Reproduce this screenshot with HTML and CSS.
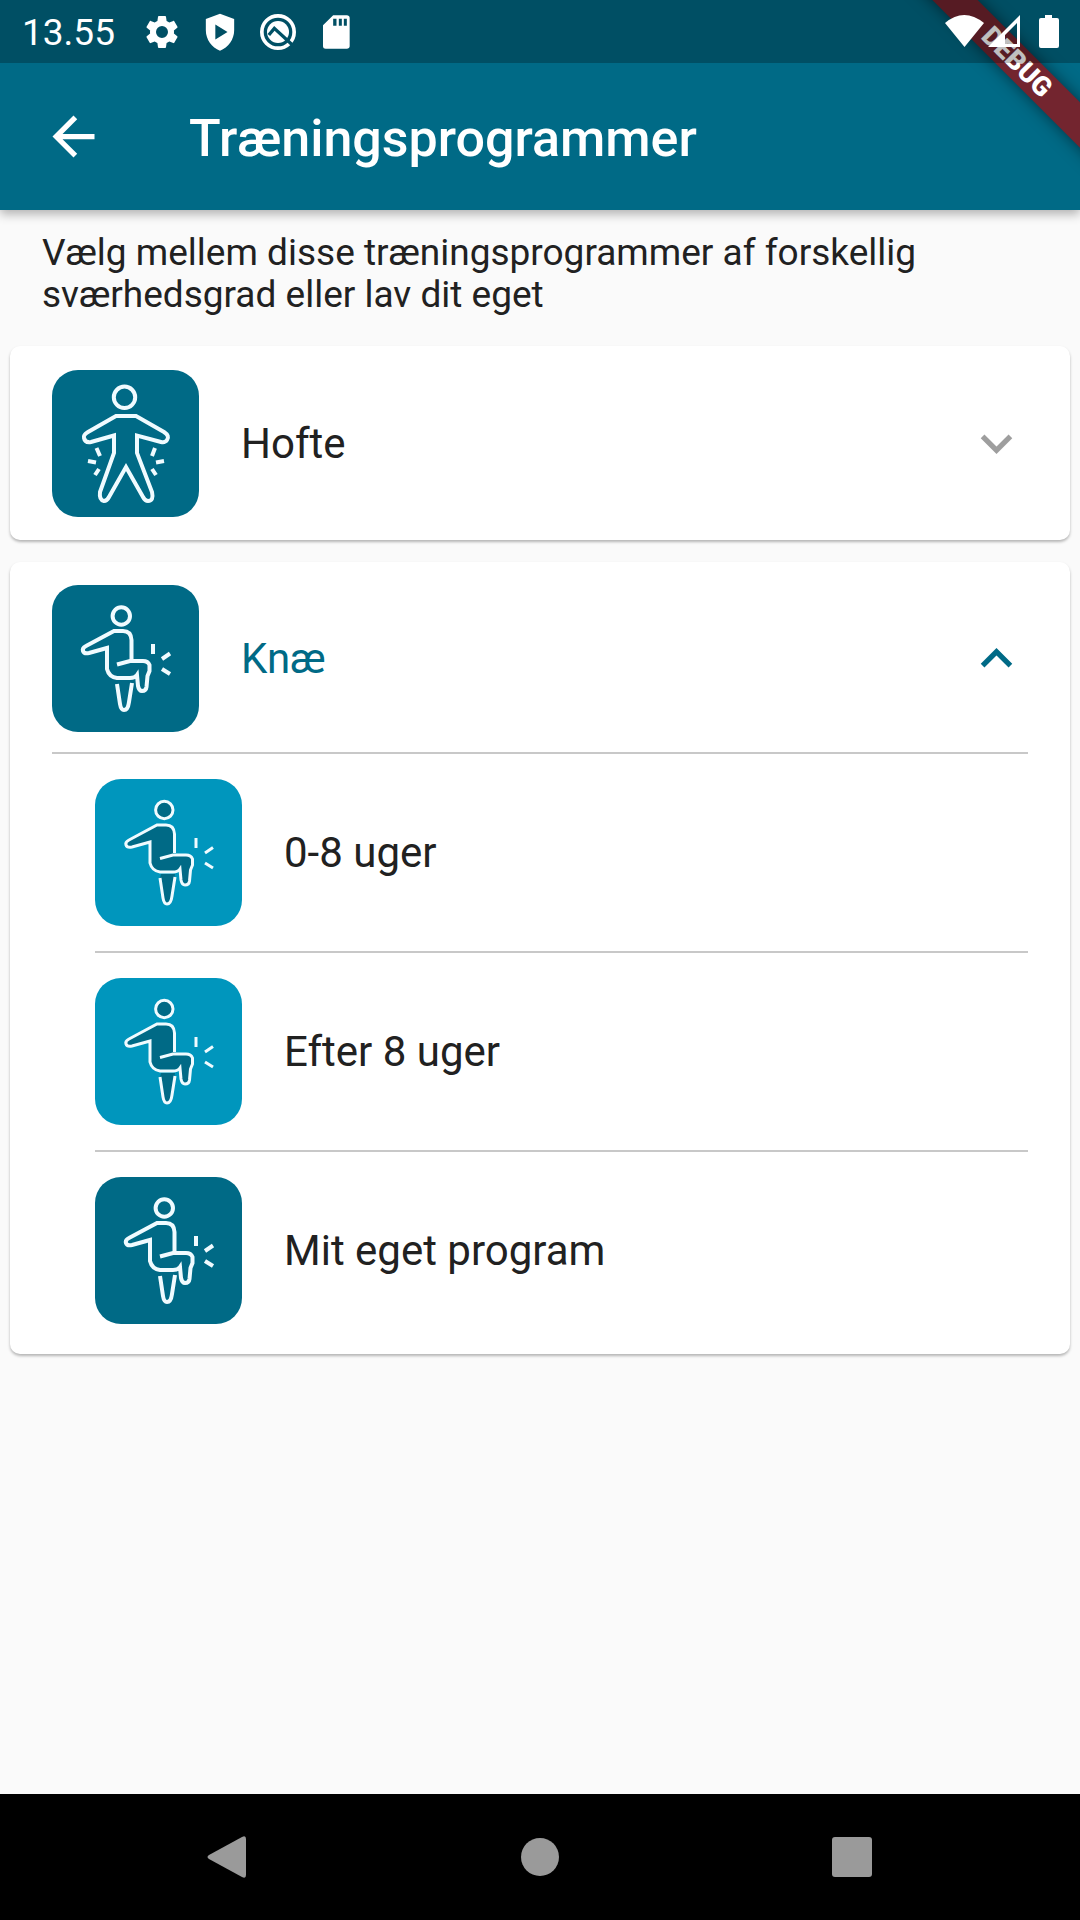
FILE: index.html
```
<!DOCTYPE html>
<html lang="da">
<head>
    <meta charset="UTF-8">
    <meta name="viewport" content="width=device-width, initial-scale=1.0">
    <title>Træningsprogrammer</title>
    <link rel="stylesheet" href="styles.css">
</head>
<body>

    <!-- Figurer som bruges flere steder -->
    <svg class="symbols" aria-hidden="true">
        <symbol id="hofte" viewBox="0 0 147 147">
            <circle cx="72.5" cy="27.3" r="10.7"/>
            <path d="M64 46H84L112 62Q118 66 115 70Q113 73 109 72L85 65.500V83L100 122Q102 131 96 131Q93 131 91 127L74 97L57 127Q55 131 52 131Q47 130 48 122L62 83V65.500L39 72Q33 73 32 68Q31 65 36 62Z"/>
            <path d="M44.500 78L48 86M36 91L44 92.500M47 99L43 105M103 78L100 86M112 91L104 92.500M100 99L104 105"/>
        </symbol>
        <symbol id="knae" viewBox="0 0 147 147">
            <circle cx="69.300" cy="31" r="8.700"/>
            <path stroke="none" d="M79 76V54Q79 46 70 46H63L32 63V68H36L55 63V84Q56 92 65 93H85V102L89 106H94L97.500 85Q98 76 91 76Z"/>
            <path stroke="none" d="M65 99L68 119L71 125H75L77 117L80 95H66Z"/>
            <path fill="none" d="M79.500 74V55Q79 46 71 46H62L34 61Q30 63 31 66Q32 69 37 68L55 63V84Q57 92 65 93H78Q83 93 85 90L86 101Q87 106 90 106Q94 106 94.500 102L95.500 91L97.500 86V80Q96 76 91 76H78L65 79.500"/>
            <path fill="none" d="M65 99L68 119Q69 125 72 125Q76 125 77 117L80 98"/>
            <path d="M101 59V69M110 74L118 68.500M110 84L118 89"/>
        </symbol>
    </svg>

    <header>
        <div class="status-bar">
            <span class="clock">13.55</span>
            <div class="status-icons">
                <svg viewBox="0 0 24 24"><path d="M19.14 12.94c.04-.3.06-.61.06-.94 0-.32-.02-.64-.07-.94l2.03-1.58c.18-.14.23-.41.12-.61l-1.92-3.32c-.12-.22-.37-.29-.59-.22l-2.39.96c-.5-.38-1.03-.7-1.62-.94l-.36-2.54c-.04-.24-.24-.41-.48-.41h-3.840c-.24 0-.43.17-.47.41l-.36 2.540c-.59.24-1.130.57-1.620.94l-2.390-.96c-.22-.08-.47 0-.59.22L2.740 8.870c-.12.21-.08.47.12.61l2.030 1.580c-.05.3-.09.63-.09.94s.02.64.07.94l-2.030 1.580c-.18.14-.23.41-.12.61l1.920 3.320c.12.22.37.29.59.22l2.390-.96c.5.38 1.030.7 1.620.94l.36 2.540c.05.24.24.41.48.41h3.840c.24 0 .44-.17.47-.41l.36-2.540c.59-.24 1.130-.56 1.620-.94l2.390.96c.22.08.47 0 .59-.22l1.920-3.320c.12-.22.07-.47-.12-.61zM12 15.600A3.600 3.600 0 1 1 12 8.400a3.600 3.600 0 0 1 0 7.200z"/></svg>
                <svg viewBox="0 0 24 24"><path fill-rule="evenodd" d="M12 1L20.500 4.200V11C20.500 16.500 17 21.300 12 23.300C7 21.300 3.500 16.500 3.500 11V4.200ZM9.200 7.500V16.500L16.500 12Z"/></svg>
                <svg viewBox="0 0 24 24" class="line"><circle cx="12" cy="12" r="9.700"/><circle class="solid" cx="12" cy="12" r="6.600"/><path class="cut" d="M6.500 13.800L9.800 9.800L21.500 20.500"/></svg>
                <svg viewBox="0 0 24 24"><path fill-rule="evenodd" d="M18.500 2H10.300L4.200 8V20.500C4.200 21.500 4.900 22 5.800 22H18.500C19.500 22 20.200 21.400 20.200 20.500V3.500C20.200 2.600 19.500 2 18.500 2ZM10.300 4V8.200H12.300V4ZM13.700 4V8.200H15.500V4ZM16.700 4V8.200H18.500V4Z"/></svg>
            </div>
            <div class="system-icons">
                <svg viewBox="0 0 116 36"><path d="M1 9Q20-7 40 9L20.500 33Z"/><path fill-rule="evenodd" d="M44 33L76 1V33ZM61 30H73V9L61 21Z"/><path d="M101 1H108V4H113Q115 4 115 6V32Q115 34 113 34H97Q95 34 95 32V6Q95 4 97 4H101Z"/></svg>
            </div>
        </div>
        <div class="app-bar">
            <a class="back" href="#" aria-label="Tilbage">
                <svg viewBox="0 0 24 24"><path d="M20 11H7.830l5.590-5.590L12 4l-8 8 8 8 1.410-1.410L7.830 13H20v-2z"/></svg>
            </a>
            <h1>Træningsprogrammer</h1>
        </div>
        <div class="banner"><span>DEBUG</span></div>
    </header>

    <main>
        <p class="intro">Vælg mellem disse træningsprogrammer af forskellig sværhedsgrad eller lav dit eget</p>

        <section class="card">
            <button class="card-header" type="button" aria-expanded="false">
                <svg class="figure"><use href="#hofte"/></svg>
                <span class="label">Hofte</span>
                <svg class="chevron" viewBox="0 0 24 24"><path d="M16.590 8.590L12 13.170 7.410 8.590 6 10l6 6 6-6z"/></svg>
            </button>
        </section>

        <section class="card">
            <button class="card-header" type="button" aria-expanded="true" aria-controls="knae-liste">
                <svg class="figure"><use href="#knae"/></svg>
                <span class="label">Knæ</span>
                <svg class="chevron" viewBox="0 0 24 24"><path d="M16.590 8.590L12 13.170 7.410 8.590 6 10l6 6 6-6z"/></svg>
            </button>
            <ul class="programs" id="knae-liste">
                <li><a href="#">
                    <svg class="figure light"><use href="#knae"/></svg>
                    <span class="label">0-8 uger</span>
                </a></li>
                <li><a href="#">
                    <svg class="figure light"><use href="#knae"/></svg>
                    <span class="label">Efter 8 uger</span>
                </a></li>
                <li><a href="#">
                    <svg class="figure"><use href="#knae"/></svg>
                    <span class="label">Mit eget program</span>
                </a></li>
            </ul>
        </section>
    </main>

    <nav>
        <button type="button" aria-label="Tilbage"><svg viewBox="0 0 42 42"><path d="M2 19L35 1Q39-1 39 3V39Q39 43 35 41L2 23Q-1 21 2 19Z"/></svg></button>
        <button type="button" aria-label="Hjem"><svg viewBox="0 0 42 42"><circle cx="21" cy="21" r="19"/></svg></button>
        <button type="button" aria-label="Seneste"><svg viewBox="0 0 42 42"><rect x="1" y="1" width="40" height="40" rx="3"/></svg></button>
    </nav>

    <script src="script.js"></script>
</body>
</html>
```
FILE: styles.css
```
* {
    margin: 0;
    padding: 0;
    box-sizing: border-box;
}

body {
    font-family: Roboto, sans-serif;
    background-color: #fafafa;
    color: #212121;
    display: flex;
    flex-direction: column;
    min-height: 100vh;
}

a {
    color: inherit;
    text-decoration: none;
}

button {
    font: inherit;
    color: inherit;
    background: none;
    border: none;
    cursor: pointer;
}

svg {
    display: block;
    flex-shrink: 0;
}

.symbols {
    position: absolute;
    width: 0;
    height: 0;
}

header {
    position: relative;
    background-color: #006a86;
    color: white;
    fill: white;
    box-shadow: 0 4px 10px rgba(0, 0, 0, 0.3);
}

.status-bar {
    position: relative;
    z-index: 2; /* Ligger over banneret */
    display: flex;
    align-items: center;
    height: 63px;
    padding: 0 20px 0 22px;
    background-color: rgba(0, 0, 0, 0.25);
}

.clock {
    padding-top: 2px;
    font-size: 37px;
    line-height: 42px;
}

.status-icons {
    display: flex;
    gap: 18px;
    margin-left: 27px;
}

.status-icons svg {
    width: 40px;
    height: 40px;
}

.status-icons .line {
    fill: none;
    stroke: white;
    stroke-width: 2.2;
}

.status-icons .solid {
    fill: white;
    stroke: none;
}

.status-icons .cut {
    stroke: #005065;
    stroke-width: 2;
}

.system-icons {
    margin-left: auto;
}

.system-icons svg {
    width: 116px;
    height: 36px;
    overflow: visible;
}

.app-bar {
    display: flex;
    align-items: center;
    gap: 84px;
    height: 147px;
    padding: 0 42px;
}

.back svg {
    width: 63px;
    height: 63px;
}

h1 {
    padding-top: 4px;
    font-size: 52px;
    line-height: 63px;
    font-weight: 500;
}

/* Skråt banner i hjørnet */
.banner {
    position: absolute;
    top: 0;
    right: 0;
    width: 220px;
    height: 210px;
    overflow: hidden;
    pointer-events: none;
    z-index: 1;
}

.banner span {
    position: absolute;
    top: 46px;
    left: 7px;
    width: 300px;
    background-color: #73252f;
    box-shadow: 0 0 16px rgba(0, 0, 0, 0.5);
    font-size: 27px;
    line-height: 32px;
    font-weight: 900;
    text-align: center;
    transform: rotate(45deg);
}

main {
    flex: 1;
    padding: 22px 10px;
}

.intro {
    padding: 0 32px;
    margin-bottom: 30px;
    font-size: 37px;
    line-height: 42px;
}

.card {
    background-color: white;
    border-radius: 10px;
    padding: 0 42px;
    margin-bottom: 22px;
    box-shadow: 0 2px 3px rgba(0, 0, 0, 0.28);
}

.card-header {
    display: flex;
    align-items: center;
    gap: 42px;
    width: 100%;
    padding: 24px 0 23px;
    text-align: left;
}

.card-header[aria-expanded="true"] {
    padding: 23px 0 20px;
    color: #006a86;
}

.label {
    flex: 1;
    font-size: 42px;
    line-height: 50px;
}

.figure {
    width: 147px;
    height: 147px;
    border-radius: 26px;
    background-color: #006a86;
    fill: #006a86;
    stroke: #f0fbff;
    stroke-width: 4;
}

.figure.light {
    background-color: #0096bd;
    stroke-width: 3;
}

.chevron {
    width: 63px;
    height: 63px;
    fill: #9e9e9e;
}

[aria-expanded="true"] .chevron {
    fill: #006a86;
    transform: rotate(180deg);
}

.programs {
    list-style: none;
    border-top: 2px solid #c8c8c8;
    padding-bottom: 5px;
}

.programs li {
    margin-left: 43px;
}

.programs li + li {
    border-top: 2px solid #c8c8c8;
}

.programs a {
    display: flex;
    align-items: center;
    gap: 42px;
    padding: 25px 0;
    color: #212121;
}

nav {
    display: flex;
    justify-content: space-around;
    align-items: center;
    height: 126px;
    padding: 0 72px;
    background-color: black;
}

nav button {
    padding: 20px;
}

nav svg {
    width: 42px;
    height: 42px;
    fill: #9a9a9a;
}
```
FILE: script.js
```
// Fold programlisten ud og ind
document.querySelectorAll('.card-header').forEach(header => {
    header.addEventListener('click', () => {
        const open = header.getAttribute('aria-expanded') === 'true';
        header.setAttribute('aria-expanded', String(!open));
        if (header.nextElementSibling) {
            header.nextElementSibling.hidden = open;
        }
    });
});
```
